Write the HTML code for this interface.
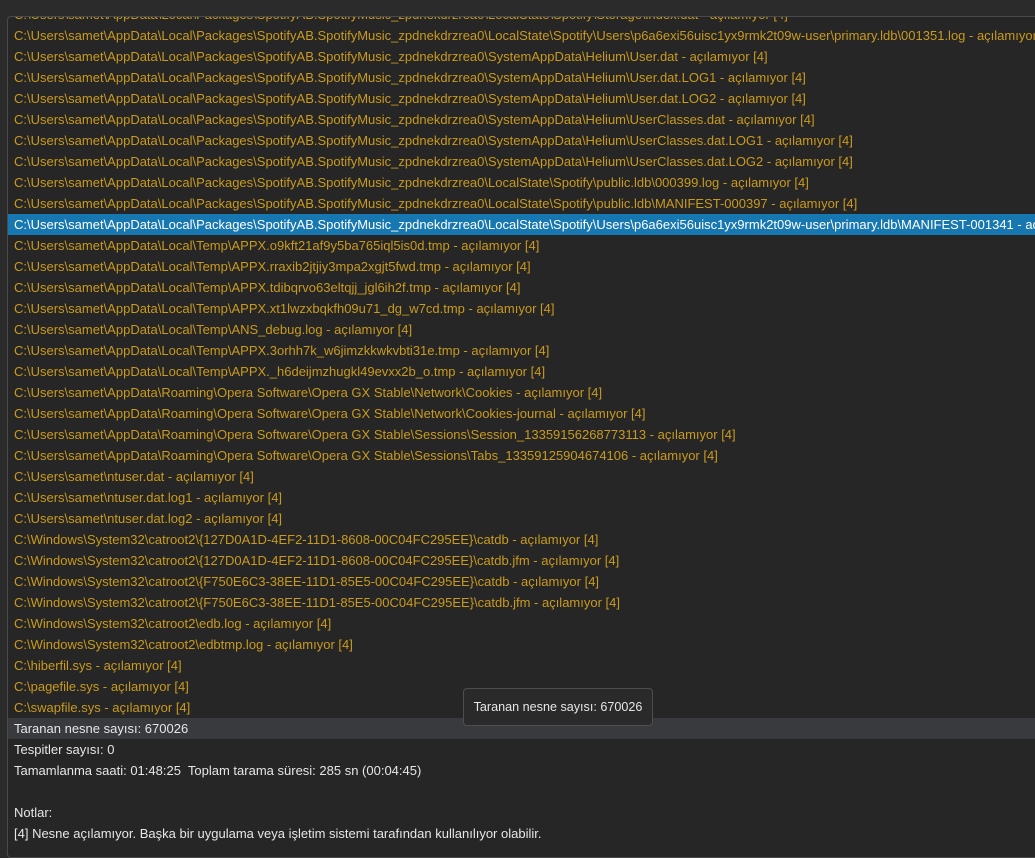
<!DOCTYPE html>
<html><head><meta charset="utf-8"><style>
html,body{margin:0;padding:0;background:#2b2b2b;width:1035px;height:848px;overflow:hidden}
.panel{position:absolute;left:7px;top:16px;width:1040px;height:840px;background:#262626;border:1px solid #4a4a4a;border-radius:4px;overflow:hidden}
.rows{position:absolute;left:0;top:-13px;width:1200px}
.r{height:21px;line-height:21px;padding-left:6px;white-space:nowrap;font-family:"Liberation Sans",sans-serif;font-size:13px;color:#c99a1e}
.sel{background:#1777b0;color:#fff}
.st{background:#383a3e;color:#e6e6e6}
.w{color:#e6e6e6}
.tip{position:absolute;left:463px;top:688px;width:188px;height:36px;background:#2a2a2a;border:1px solid #4e4e4e;border-radius:4px;font-family:"Liberation Sans",sans-serif;font-size:12.6px;color:#e6e6e6;line-height:36px;text-align:center}
</style></head><body>
<div class="panel"><div class="rows">
<div class="r">C:\Users\samet\AppData\Local\Packages\SpotifyAB.SpotifyMusic_zpdnekdrzrea0\LocalState\Spotify\Storage\index.dat - açılamıyor [4]</div>
<div class="r">C:\Users\samet\AppData\Local\Packages\SpotifyAB.SpotifyMusic_zpdnekdrzrea0\LocalState\Spotify\Users\p6a6exi56uisc1yx9rmk2t09w-user\primary.ldb\001351.log - açılamıyor [4]</div>
<div class="r">C:\Users\samet\AppData\Local\Packages\SpotifyAB.SpotifyMusic_zpdnekdrzrea0\SystemAppData\Helium\User.dat - açılamıyor [4]</div>
<div class="r">C:\Users\samet\AppData\Local\Packages\SpotifyAB.SpotifyMusic_zpdnekdrzrea0\SystemAppData\Helium\User.dat.LOG1 - açılamıyor [4]</div>
<div class="r">C:\Users\samet\AppData\Local\Packages\SpotifyAB.SpotifyMusic_zpdnekdrzrea0\SystemAppData\Helium\User.dat.LOG2 - açılamıyor [4]</div>
<div class="r">C:\Users\samet\AppData\Local\Packages\SpotifyAB.SpotifyMusic_zpdnekdrzrea0\SystemAppData\Helium\UserClasses.dat - açılamıyor [4]</div>
<div class="r">C:\Users\samet\AppData\Local\Packages\SpotifyAB.SpotifyMusic_zpdnekdrzrea0\SystemAppData\Helium\UserClasses.dat.LOG1 - açılamıyor [4]</div>
<div class="r">C:\Users\samet\AppData\Local\Packages\SpotifyAB.SpotifyMusic_zpdnekdrzrea0\SystemAppData\Helium\UserClasses.dat.LOG2 - açılamıyor [4]</div>
<div class="r">C:\Users\samet\AppData\Local\Packages\SpotifyAB.SpotifyMusic_zpdnekdrzrea0\LocalState\Spotify\public.ldb\000399.log - açılamıyor [4]</div>
<div class="r">C:\Users\samet\AppData\Local\Packages\SpotifyAB.SpotifyMusic_zpdnekdrzrea0\LocalState\Spotify\public.ldb\MANIFEST-000397 - açılamıyor [4]</div>
<div class="r sel">C:\Users\samet\AppData\Local\Packages\SpotifyAB.SpotifyMusic_zpdnekdrzrea0\LocalState\Spotify\Users\p6a6exi56uisc1yx9rmk2t09w-user\primary.ldb\MANIFEST-001341 - açılamıyor [4]</div>
<div class="r">C:\Users\samet\AppData\Local\Temp\APPX.o9kft21af9y5ba765iql5is0d.tmp - açılamıyor [4]</div>
<div class="r">C:\Users\samet\AppData\Local\Temp\APPX.rraxib2jtjiy3mpa2xgjt5fwd.tmp - açılamıyor [4]</div>
<div class="r">C:\Users\samet\AppData\Local\Temp\APPX.tdibqrvo63eltqjj_jgl6ih2f.tmp - açılamıyor [4]</div>
<div class="r">C:\Users\samet\AppData\Local\Temp\APPX.xt1lwzxbqkfh09u71_dg_w7cd.tmp - açılamıyor [4]</div>
<div class="r">C:\Users\samet\AppData\Local\Temp\ANS_debug.log - açılamıyor [4]</div>
<div class="r">C:\Users\samet\AppData\Local\Temp\APPX.3orhh7k_w6jimzkkwkvbti31e.tmp - açılamıyor [4]</div>
<div class="r">C:\Users\samet\AppData\Local\Temp\APPX._h6deijmzhugkl49evxx2b_o.tmp - açılamıyor [4]</div>
<div class="r">C:\Users\samet\AppData\Roaming\Opera Software\Opera GX Stable\Network\Cookies - açılamıyor [4]</div>
<div class="r">C:\Users\samet\AppData\Roaming\Opera Software\Opera GX Stable\Network\Cookies-journal - açılamıyor [4]</div>
<div class="r">C:\Users\samet\AppData\Roaming\Opera Software\Opera GX Stable\Sessions\Session_13359156268773113 - açılamıyor [4]</div>
<div class="r">C:\Users\samet\AppData\Roaming\Opera Software\Opera GX Stable\Sessions\Tabs_13359125904674106 - açılamıyor [4]</div>
<div class="r">C:\Users\samet\ntuser.dat - açılamıyor [4]</div>
<div class="r">C:\Users\samet\ntuser.dat.log1 - açılamıyor [4]</div>
<div class="r">C:\Users\samet\ntuser.dat.log2 - açılamıyor [4]</div>
<div class="r">C:\Windows\System32\catroot2\{127D0A1D-4EF2-11D1-8608-00C04FC295EE}\catdb - açılamıyor [4]</div>
<div class="r">C:\Windows\System32\catroot2\{127D0A1D-4EF2-11D1-8608-00C04FC295EE}\catdb.jfm - açılamıyor [4]</div>
<div class="r">C:\Windows\System32\catroot2\{F750E6C3-38EE-11D1-85E5-00C04FC295EE}\catdb - açılamıyor [4]</div>
<div class="r">C:\Windows\System32\catroot2\{F750E6C3-38EE-11D1-85E5-00C04FC295EE}\catdb.jfm - açılamıyor [4]</div>
<div class="r">C:\Windows\System32\catroot2\edb.log - açılamıyor [4]</div>
<div class="r">C:\Windows\System32\catroot2\edbtmp.log - açılamıyor [4]</div>
<div class="r">C:\hiberfil.sys - açılamıyor [4]</div>
<div class="r">C:\pagefile.sys - açılamıyor [4]</div>
<div class="r">C:\swapfile.sys - açılamıyor [4]</div>
<div class="r st">Taranan nesne sayısı: 670026</div>
<div class="r w">Tespitler sayısı: 0</div>
<div class="r w">Tamamlanma saati: 01:48:25&nbsp; Toplam tarama süresi: 285 sn (00:04:45)</div>
<div class="r w"></div>
<div class="r w">Notlar:</div>
<div class="r w">[4] Nesne açılamıyor. Başka bir uygulama veya işletim sistemi tarafından kullanılıyor olabilir.</div>
</div></div>
<div class="tip">Taranan nesne sayısı: 670026</div>
</body></html>
